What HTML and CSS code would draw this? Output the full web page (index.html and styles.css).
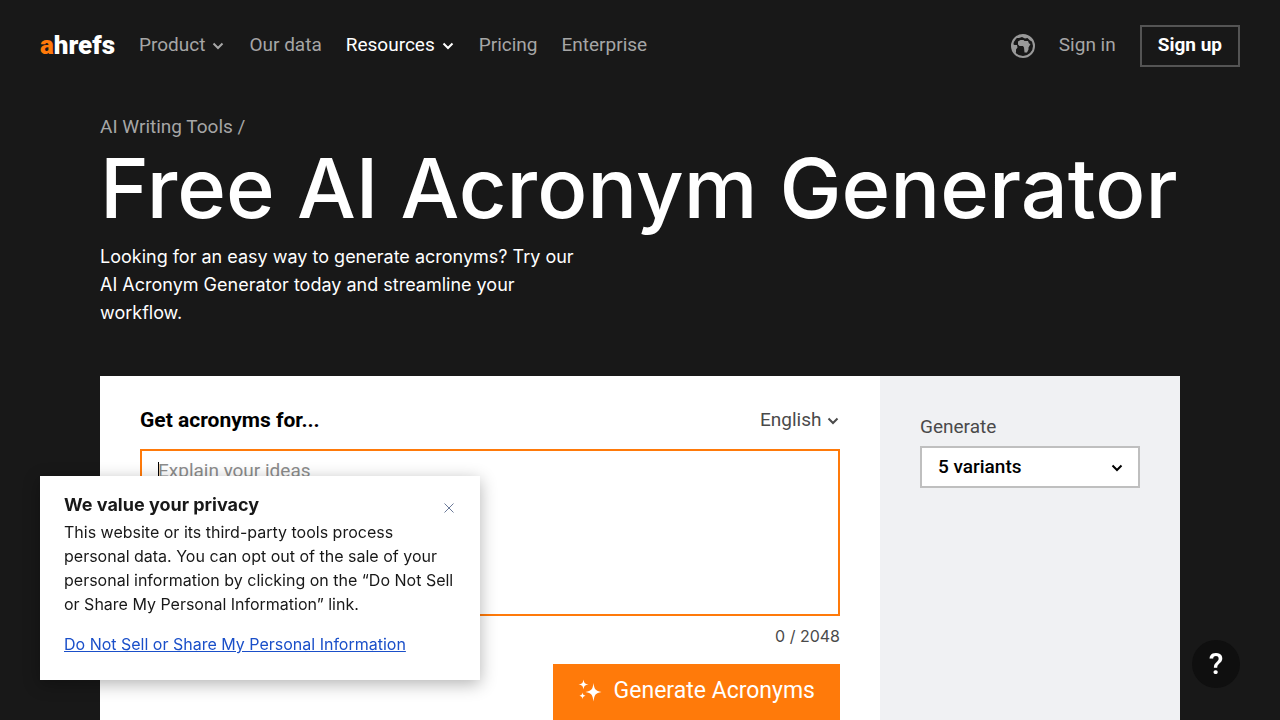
FILE: index.html
```
<!DOCTYPE html>
<html lang="en">
<head>
    <meta charset="UTF-8">
    <meta name="viewport" content="width=device-width, initial-scale=1.0">
    <title>Free AI Acronym Generator</title>
    <link rel="stylesheet" href="styles.css">
</head>
<body>
    <header class="header">
        <a class="logo" href="#"><span>a</span>hrefs</a>
        <nav class="nav">
            <a href="#">Product
                <svg class="chevron" viewBox="0 0 14 14"><path d="M2.500 5.500L7 10l4.500-4.500"/></svg>
            </a>
            <a href="#">Our data</a>
            <a class="active" href="#">Resources
                <svg class="chevron" viewBox="0 0 14 14"><path d="M2.500 5.500L7 10l4.500-4.500"/></svg>
            </a>
            <a href="#">Pricing</a>
            <a href="#">Enterprise</a>
        </nav>
        <div class="account">
            <button class="globe" type="button" aria-label="Change language">
                <svg viewBox="0 0 24 24">
                    <circle cx="12" cy="12" r="11"/>
                    <path d="M7 7.500L9.500 6h3l1 1h3.500l1 2.500 1.500.5-2 3.500v2l-1.500 3h-2.500l-.5-5-1-1.500H8.500L7 10.500zM1 9.500l2.500 1.500H6l.5 2.500L5 15.500V19l-2-1.500-2-4zM4 4l6-3h4l5 2.500 2.500 4-2.500-1-2.500-2.500-2.500.5-3-1.500-3 1z"/>
                </svg>
            </button>
            <a class="sign-in" href="#">Sign in</a>
            <a class="sign-up" href="#">Sign up</a>
        </div>
    </header>

    <main class="container">
        <div class="breadcrumbs"><a href="#">AI Writing Tools</a> /</div>
        <h1>Free AI Acronym Generator</h1>
        <p class="intro">Looking for an easy way to generate acronyms? Try our AI Acronym Generator today and streamline your workflow.</p>

        <form class="tool">
            <div class="tool-main">
                <div class="tool-head">
                    <label class="tool-title" for="ideas">Get acronyms for...</label>
                    <div class="select language">
                        <select aria-label="Language">
                            <option>English</option>
                        </select>
                        <svg class="chevron" viewBox="0 0 14 14"><path d="M2.500 5.500L7 10l4.500-4.500"/></svg>
                    </div>
                </div>
                <textarea id="ideas" placeholder="Explain your ideas" maxlength="2048" autofocus></textarea>
                <div class="counter">0 / 2048</div>
                <button class="generate" type="button">
                    <svg viewBox="0 0 24 24">
                        <path d="M15.500 4c.9 6.500 2 7.800 8 9-6 1.200-7.100 2.500-8 9.500-.9-7-2-8.300-8-9.500 6-1.200 7.100-2.500 8-9zM5.500.5c.7 3.800 1.200 4.300 5 5-3.800.7-4.300 1.200-5 5-.7-3.800-1.200-4.300-5-5 3.800-.7 4.300-1.200 5-5zM4.500 13.500c.5 2.300 1 2.700 3 3.200-2 .5-2.500.9-3 3.200-.5-2.300-1-2.700-3-3.200 2-.5 2.500-.9 3-3.200z"/>
                    </svg>
                    Generate Acronyms
                </button>
            </div>
            <div class="tool-side">
                <label for="variants">Generate</label>
                <div class="select variants">
                    <select id="variants">
                        <option>5 variants</option>
                    </select>
                    <svg class="chevron" viewBox="0 0 14 14"><path d="M2.500 5.500L7 10l4.500-4.500"/></svg>
                </div>
            </div>
        </form>
    </main>

    <section class="privacy">
        <div class="privacy-head">
            <h2>We value your privacy</h2>
            <button class="close" type="button" aria-label="Close">
                <svg viewBox="0 0 10 10"><path d="M.5.5l9 9M9.500.5l-9 9"/></svg>
            </button>
        </div>
        <p>This website or its third-party tools process personal data. You can opt out of the sale of your personal information by clicking on the “Do Not Sell or Share My Personal Information” link.</p>
        <a href="#">Do Not Sell or Share My Personal Information</a>
    </section>

    <button class="help" type="button">?</button>
</body>
</html>
```
FILE: styles.css
```
* {
    box-sizing: border-box;
}
body {
    margin: 0;
    background-color: #181818;
    color: #fff;
    font-family: Roboto, "Liberation Sans", sans-serif;
    font-size: 19px;
    line-height: 28px;
}
a {
    color: inherit;
    text-decoration: none;
}
button, select, textarea {
    font: inherit;
    color: inherit;
    border-radius: 0;
}
button, select {
    cursor: pointer;
}
.header {
    display: flex;
    align-items: center;
    height: 92px;
    padding: 0 40px;
}
.logo {
    width: 75px;
    margin-right: 24px;
    padding-bottom: 2px;
    font-size: 26px;
    font-weight: 900;
}
.logo span {
    color: #ff7a0a;
}
.nav {
    display: flex;
    gap: 24px;
    padding-bottom: 2px;
    color: #a6a6a6;
}
.nav a {
    display: flex;
    align-items: center;
    gap: 6px;
}
.nav .active {
    color: #fff;
}
.chevron {
    width: 14px;
    height: 14px;
    fill: none;
    stroke: currentColor;
    stroke-width: 2;
}
.account {
    display: flex;
    align-items: center;
    gap: 24px;
    margin-left: auto;
    color: #a6a6a6;
}
.globe {
    width: 24px;
    height: 24px;
    padding: 0;
    border: none;
    background: none;
}
.globe svg {
    display: block;
    fill: #999;
}
.globe circle {
    fill: none;
    stroke: #999;
    stroke-width: 2;
}
.sign-in {
    padding-bottom: 2px;
}
.sign-up {
    padding: 4px 16px 6px;
    border: 2px solid #545454;
    color: #fff;
    font-weight: bold;
}
.container {
    max-width: 1080px;
    margin: 0 auto;
    padding-top: 21px;
}
.breadcrumbs {
    color: #a6a6a6;
}
h1 {
    margin: 0;
    font-family: Inter, sans-serif;
    font-size: 83px;
    font-weight: 500;
    line-height: 94px;
    white-space: nowrap;
}
.intro {
    max-width: 480px;
    margin: 8px 0 49px;
    font-family: Inter, sans-serif;
    font-size: 18px;
}
.tool {
    display: flex;
    min-height: 408px;
    background-color: #fff;
    color: #000;
}
.tool-main {
    display: flex;
    flex: 1;
    flex-direction: column;
    padding: 30px 40px 40px;
}
.tool-head {
    display: flex;
    align-items: center;
    justify-content: space-between;
    margin-bottom: 15px;
}
.tool-title {
    font-size: 21px;
    font-weight: bold;
}
.select {
    display: grid;
    align-items: center;
}
.select select {
    grid-area: 1 / 1;
    appearance: none;
    border: none;
    background: none;
    padding: 0 18px 0 0;
}
.select .chevron {
    grid-area: 1 / 1;
    justify-self: end;
    pointer-events: none;
}
.language {
    color: #4a4a4a;
}
/* the gradient is the text cursor of the empty field */
textarea {
    display: block;
    width: 100%;
    height: 167px;
    padding: 6px 16px;
    border: 2px solid #ff7a0a;
    outline: none;
    background: linear-gradient(#000, #000) 16px 11px / 1px 20px no-repeat;
    caret-color: transparent;
    resize: none;
}
textarea::placeholder {
    color: #8c8c8c;
}
.counter {
    margin: 6px 0 14px;
    color: #4a4a4a;
    font-family: Inter, sans-serif;
    font-size: 16px;
    text-align: right;
}
.generate {
    display: flex;
    align-items: center;
    align-self: flex-end;
    gap: 12px;
    height: 56px;
    padding: 0 25px 2px;
    border: none;
    background-color: #ff7a0a;
    color: #fff;
    font-size: 23px;
}
.generate svg {
    width: 24px;
    height: 24px;
    fill: currentColor;
}
.tool-side {
    width: 300px;
    padding: 37px 40px;
    background-color: #f0f1f3;
}
.tool-side label {
    display: block;
    margin-bottom: 5px;
    color: #4a4a4a;
}
.variants {
    height: 42px;
    padding: 0 14px 0 16px;
    border: 2px solid #bfbfbf;
    background-color: #fff;
    font-weight: 500;
}
.privacy {
    position: fixed;
    bottom: 40px;
    left: 40px;
    width: 440px;
    padding: 16px 24px 24px;
    background-color: #fff;
    box-shadow: 0 4px 16px rgba(0, 0, 0, 0.3);
    color: #181818;
    font-family: Inter, sans-serif;
    font-size: 16px;
    line-height: 24px;
}
.privacy-head {
    display: flex;
    justify-content: space-between;
}
.privacy h2 {
    margin: 0 0 2px;
    font-size: 18px;
    line-height: 26px;
}
.close {
    width: 12px;
    padding: 4px 0 0;
    border: none;
    background: none;
}
.close svg {
    display: block;
    width: 10px;
    height: 10px;
    fill: none;
    stroke: #6b7a99;
}
.privacy p {
    margin: 0 0 16px;
}
.privacy a {
    color: #1a4fc9;
    text-decoration: underline;
}
.help {
    position: fixed;
    right: 40px;
    bottom: 32px;
    width: 48px;
    height: 48px;
    padding: 0;
    border: none;
    border-radius: 50%;
    background-color: #0f0f0f;
    font-size: 30px;
    font-weight: 500;
}
```
